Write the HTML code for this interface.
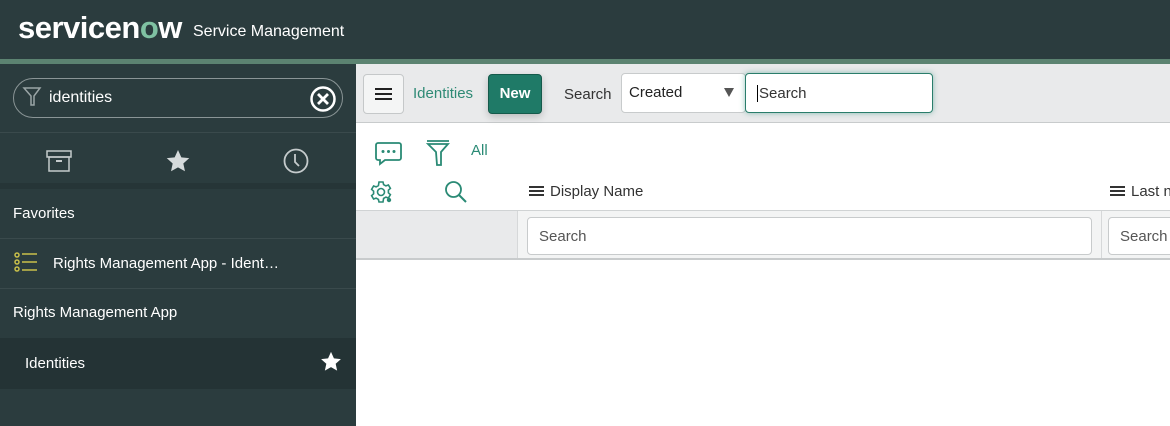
<!DOCTYPE html><html><head><style>
*{box-sizing:border-box;margin:0;padding:0}
body{width:1170px;height:426px;overflow:hidden;font-family:"Liberation Sans",sans-serif;background:#fff;position:relative}
.a{position:absolute;white-space:nowrap}
</style></head><body>
<div class="a" style="left:0;top:0;width:1170px;height:60px;background:#2b3c3e"></div>
<div class="a" style="left:18px;top:10px;color:#fff;font-size:31px;font-weight:bold;letter-spacing:-0.5px">servicen<span style="color:#7fc1a2">o</span>w</div>
<div class="a" style="left:193px;top:23px;color:#fff;font-size:16px">Service Management</div>
<div class="a" style="left:0;top:59px;width:1170px;height:5px;background:#5c8371"></div>
<div class="a" style="left:0;top:64px;width:356px;height:362px;background:#2b3c3e"></div>
<div class="a" style="left:13px;top:78px;width:330px;height:40px;border:1px solid #8a9596;border-radius:20px"></div>
<svg class="a" style="left:22px;top:86px" width="20" height="22" viewBox="0 0 20 22"><path d="M2 2h16l-6 8v9h-3v-9z" fill="none" stroke="#9aa5a6" stroke-width="1.5"/></svg>
<div class="a" style="left:49px;top:89px;color:#fff;font-size:16px">identities</div>
<svg class="a" style="left:309px;top:85px" width="28" height="28"><circle cx="14" cy="14" r="11.5" fill="none" stroke="#fff" stroke-width="2.5"/><path d="M9 9l10 10M19 9l-10 10" stroke="#fff" stroke-width="2.8"/></svg>
<div class="a" style="left:0;top:132px;width:356px;height:1px;background:#3a4a4c"></div>
<svg class="a" style="left:46px;top:150px" width="26" height="22"><rect x="1" y="1" width="24" height="6" fill="none" stroke="#c5cbcc" stroke-width="1.5"/><rect x="3" y="7" width="20" height="14" fill="none" stroke="#c5cbcc" stroke-width="1.5"/><rect x="10" y="10" width="6" height="2" fill="#c5cbcc"/></svg>
<svg class="a" style="left:165px;top:149px" width="26" height="25" viewBox="0 0 24 24"><path d="M12 1l3.2 7 7.6.8-5.7 5.1 1.6 7.5L12 17.6 5.3 21.4l1.6-7.5L1.2 8.8 8.8 8z" fill="#d5dadb"/></svg>
<svg class="a" style="left:283px;top:148px" width="26" height="26"><circle cx="13" cy="13" r="11.5" fill="none" stroke="#c5cbcc" stroke-width="1.8"/><path d="M12 6v8l4 4" fill="none" stroke="#c5cbcc" stroke-width="1.8"/></svg>
<div class="a" style="left:0;top:183px;width:356px;height:6px;background:#263537"></div>
<div class="a" style="left:13px;top:205px;color:#fff;font-size:15px">Favorites</div>
<div class="a" style="left:0;top:238px;width:356px;height:1px;background:#3a4a4c"></div>
<svg class="a" style="left:14px;top:252px" width="24" height="20"><g fill="none" stroke="#c9c04a" stroke-width="1.5"><circle cx="3" cy="3" r="2"/><circle cx="3" cy="10" r="2"/><circle cx="3" cy="17" r="2"/><path d="M8 2h15M8 10h15M8 18h15"/></g></svg>
<div class="a" style="left:53px;top:255px;color:#fff;font-size:15px">Rights Management App - Ident…</div>
<div class="a" style="left:0;top:288px;width:356px;height:1px;background:#3a4a4c"></div>
<div class="a" style="left:13px;top:304px;color:#fff;font-size:15px">Rights Management App</div>
<div class="a" style="left:0;top:338px;width:356px;height:51px;background:#243335"></div>
<div class="a" style="left:25px;top:355px;color:#fff;font-size:15px">Identities</div>
<svg class="a" style="left:320px;top:351px" width="22" height="22" viewBox="0 0 24 24"><path d="M12 1l3.2 7 7.6.8-5.7 5.1 1.6 7.5L12 17.6 5.3 21.4l1.6-7.5L1.2 8.8 8.8 8z" fill="#fff"/></svg>
<div class="a" style="left:356px;top:64px;width:814px;height:59px;background:#e9eaeb;border-bottom:1px solid #c8cbcc"></div>
<div class="a" style="left:363px;top:74px;width:41px;height:40px;border:1px solid #c5c8c9;border-radius:4px;background:#f4f5f5"></div>
<div class="a" style="left:375px;top:88px;width:17px;height:2px;background:#222;box-shadow:0 5px 0 #222,0 10px 0 #222"></div>
<div class="a" style="left:413px;top:85px;color:#2e8a75;font-size:15px">Identities</div>
<div class="a" style="left:488px;top:74px;width:54px;height:40px;background:#1f7a67;border:1px solid #155a4b;border-radius:4px;color:#fff;font-size:15px;font-weight:bold;text-align:center;line-height:38px;box-shadow:0 3px 8px rgba(0,0,0,.2)">New</div>
<div class="a" style="left:564px;top:86px;color:#333;font-size:15px">Search</div>
<div class="a" style="left:621px;top:73px;width:125px;height:40px;background:#fff;border:1px solid #c8cbcc;border-radius:4px"></div>
<div class="a" style="left:629px;top:84px;color:#222;font-size:15px">Created</div>
<div class="a" style="left:724px;top:88px;width:0;height:0;border-left:5px solid transparent;border-right:5px solid transparent;border-top:9px solid #555"></div>
<div class="a" style="left:745px;top:73px;width:188px;height:40px;background:#fff;border:1px solid #2a7d6b;border-radius:4px;box-shadow:0 0 6px rgba(40,140,120,.5)"></div>
<div class="a" style="left:757px;top:85px;color:#333;font-size:15px;border-left:1px solid #000;padding-left:1px">Search</div>
<svg class="a" style="left:375px;top:142px" width="27" height="24"><path d="M3 1h21a2 2 0 012 2v13a2 2 0 01-2 2H10l-5 4v-4H3a2 2 0 01-2-2V3a2 2 0 012-2z" fill="none" stroke="#2a8a75" stroke-width="1.8"/><circle cx="8" cy="9.5" r="1.5" fill="#2a8a75"/><circle cx="13.5" cy="9.5" r="1.5" fill="#2a8a75"/><circle cx="19" cy="9.5" r="1.5" fill="#2a8a75"/></svg>
<svg class="a" style="left:426px;top:140px" width="24" height="26"><path d="M1 1h22M2 4h20l-7 8v13h-4l-1-13z" fill="none" stroke="#2a8a75" stroke-width="1.8"/></svg>
<div class="a" style="left:471px;top:142px;color:#2a8a75;font-size:15px">All</div>
<svg class="a" style="left:369px;top:180px" width="24" height="24" viewBox="0 0 24 24"><g fill="none" stroke="#2a8a75" stroke-width="1.6"><circle cx="12" cy="12" r="3.5"/><path d="M10 2h4l.6 2.6 2.3 1.3 2.5-.9 2 3.4-2 1.8v2.6l2 1.8-2 3.4-2.5-.9-2.3 1.3L14 22h-4l-.6-2.6-2.3-1.3-2.5.9-2-3.4 2-1.8v-2.6l-2-1.8 2-3.4 2.5.9 2.3-1.3z"/></g><circle cx="20" cy="20" r="2.2" fill="#2a8a75"/></svg>
<svg class="a" style="left:444px;top:180px" width="24" height="24"><circle cx="9.5" cy="9.5" r="7.5" fill="none" stroke="#2a8a75" stroke-width="1.8"/><path d="M15 15l7 7" stroke="#2a8a75" stroke-width="2"/></svg>
<div class="a" style="left:529px;top:186px;width:15px;height:2px;background:#333;box-shadow:0 4px 0 #333,0 8px 0 #333"></div>
<div class="a" style="left:550px;top:183px;color:#333;font-size:15px">Display Name</div>
<div class="a" style="left:1110px;top:186px;width:15px;height:2px;background:#333;box-shadow:0 4px 0 #333,0 8px 0 #333"></div>
<div class="a" style="left:1131px;top:183px;color:#333;font-size:15px">Last n</div>
<div class="a" style="left:356px;top:210px;width:814px;height:50px;background:#f3f4f4;border-top:1px solid #d0d3d4;border-bottom:2px solid #c8cbcc"></div>
<div class="a" style="left:356px;top:211px;width:162px;height:47px;background:#e9eaeb;border-right:1px solid #d6d8d9"></div>
<div class="a" style="left:1101px;top:211px;width:1px;height:47px;background:#d6d8d9"></div>
<div class="a" style="left:527px;top:217px;width:565px;height:38px;background:#fff;border:1px solid #c8cbcc;border-radius:4px"></div>
<div class="a" style="left:539px;top:228px;color:#555;font-size:15px">Search</div>
<div class="a" style="left:1108px;top:217px;width:80px;height:38px;background:#fff;border:1px solid #c8cbcc;border-radius:4px"></div>
<div class="a" style="left:1120px;top:228px;color:#555;font-size:15px">Search</div>
</body></html>
